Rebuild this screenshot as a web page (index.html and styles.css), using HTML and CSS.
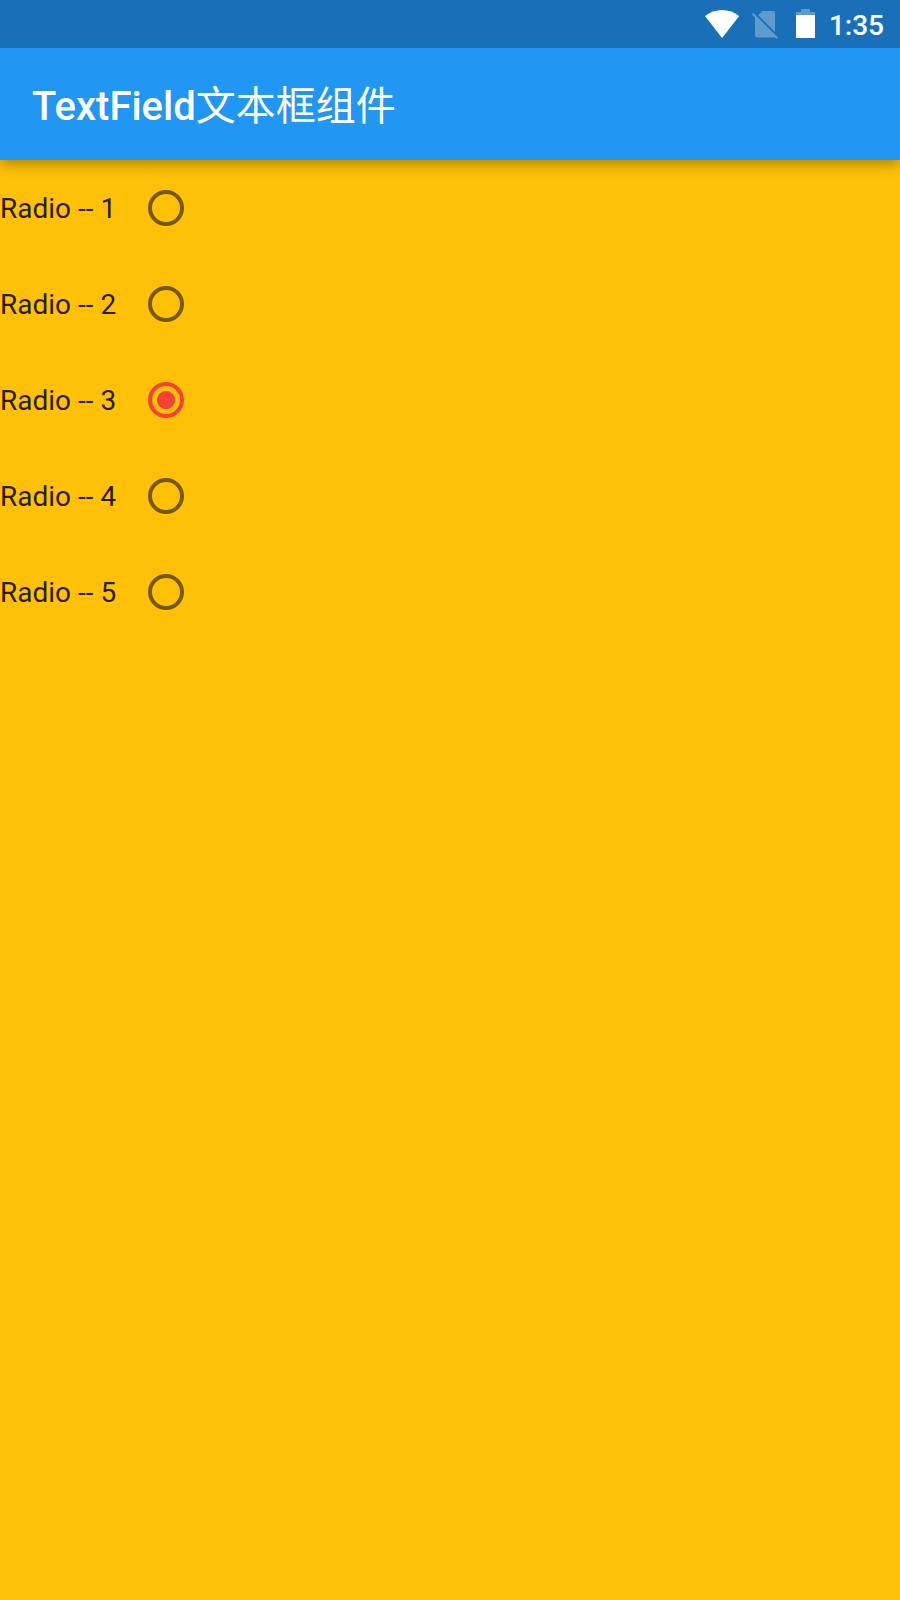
FILE: index.html
```html
<!DOCTYPE html>
<html lang="zh">
<head>
<meta charset="utf-8">
<title>TextField文本框组件</title>
<link rel="stylesheet" href="styles.css">
</head>
<body>
<div class="status">
  <svg class="wifi" width="35" height="28" viewBox="0 0 35 28"><path d="M0 6C5 2 11 0 17.100 0s12.100 2 17.100 6L17.100 28z" fill="#fff"/></svg>
  <svg class="sim" width="28" height="28" viewBox="0 0 28 28"><path d="M10.500 0H21a2 2 0 0 1 2 2V21L6.200 4.300zM1.400 2L26 26.500 24.600 27.900 22.800 26.200 22 26.400H5a2 2 0 0 1-2-2V6.400L0 3.400z" fill="#fff" opacity=".3"/></svg>
  <svg class="battery" width="19" height="29" viewBox="0 0 19 29"><path d="M5 0h9v3h5v3H0V3h5z" fill="#fff" opacity=".3"/><path d="M0 6h19v23H0z" fill="#fff"/></svg>
  <span class="time">1:35</span>
</div>
<header class="appbar"><h1 class="title">TextField<span class="cjk">文本框组件</span></h1></header>
<main class="list">
  <label class="row"><span class="label">Radio -- 1</span><span class="radio"></span></label>
  <label class="row"><span class="label">Radio -- 2</span><span class="radio"></span></label>
  <label class="row"><span class="label">Radio -- 3</span><span class="radio checked"></span></label>
  <label class="row"><span class="label">Radio -- 4</span><span class="radio"></span></label>
  <label class="row"><span class="label">Radio -- 5</span><span class="radio"></span></label>
</main>
</body>
</html>
```
FILE: styles.css
```css
* { box-sizing: border-box; }
body { margin: 0; height: 1600px; overflow: hidden; background: #ffc107; font-family: Roboto, "Noto Sans CJK SC", sans-serif; }
.status { position: relative; z-index: 1; height: 48px; padding: 0 16px 0 0; display: flex; align-items: flex-start; justify-content: flex-end; background: #1a70b8; color: #fff; }
.wifi { margin: 10px 12px 0 0; }
.sim { margin: 11px 16px 0 0; }
.battery { margin: 9px 14px 0 0; }
.time { font-size: 28px; font-weight: 500; line-height: 48px; padding-top: 2px; }
.appbar { height: 112px; padding: 6px 0 0 32px; display: flex; align-items: center; background: #2196f3; color: #fff; box-shadow: 0 5px 12px rgba(0,0,0,.29); }
.title { margin: 0; font-size: 40px; font-weight: 500; line-height: 56px; white-space: nowrap; }
.cjk { font-weight: 400; }
.list { display: flex; flex-direction: column; }
.row { height: 96px; display: flex; align-items: center; }
.label { width: 148px; font-size: 28px; color: rgba(0,0,0,.87); white-space: nowrap; }
.radio { width: 36px; height: 36px; border: 4px solid rgba(0,0,0,.54); border-radius: 50%; }
.checked { border-color: #f44336; background: radial-gradient(circle, #f44336 8.600px, transparent 9.400px); }
```
